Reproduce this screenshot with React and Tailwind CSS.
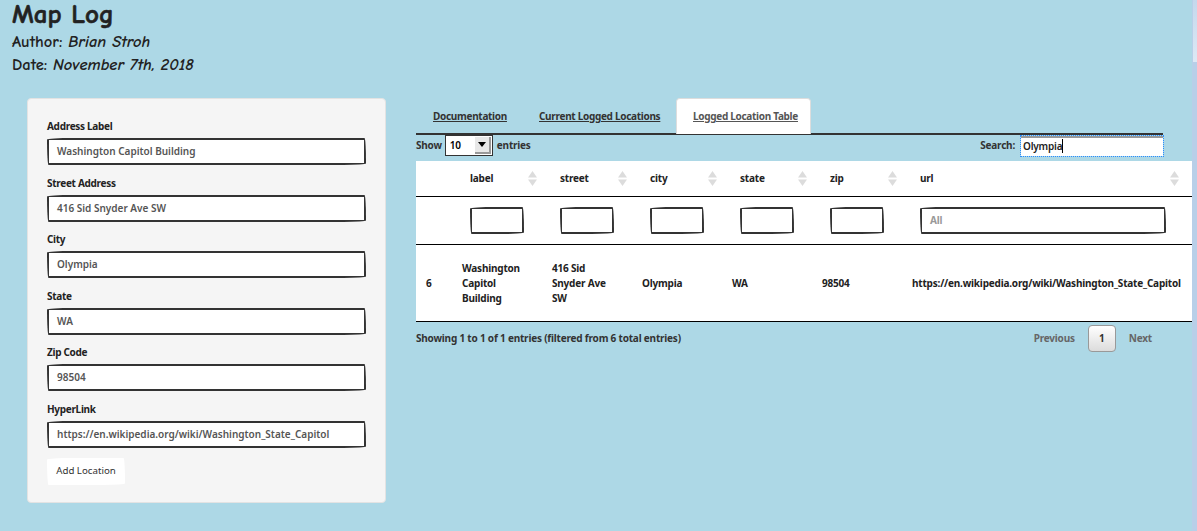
const sketch = "rounded-[255px_15px_225px_15px/15px_225px_15px_255px]";

const fields = [
  ["Address Label", "Washington Capitol Building"],
  ["Street Address", "416 Sid Snyder Ave SW"],
  ["City", "Olympia"],
  ["State", "WA"],
  ["Zip Code", "98504"],
  ["HyperLink", "https://en.wikipedia.org/wiki/Washington_State_Capitol"],
];

const columns = ["label", "street", "city", "state", "zip", "url"];

function SortArrows() {
  return (
    <svg width="9" height="15" viewBox="0 0 9 15" className="shrink-0">
      <path d="M4.5 0 L9 6.5 L0 6.5 Z" fill="#dcdcdc" />
      <path d="M0 8.5 L9 8.5 L4.5 15 Z" fill="#dcdcdc" />
    </svg>
  );
}

function Field({ label, value }) {
  return (
    <div className="mb-[10.5px]">
      <label className="block h-[14px] mb-[5px] text-[10px] tracking-[-0.3px] leading-[14px] font-bold text-[#222]">{label}</label>
      <div className={`h-[27px] w-[319px] px-[8px] border-2 border-[#333] bg-white text-[10px] leading-[23px] font-semibold text-[#555] whitespace-nowrap ${sketch}`}>
        {value}
      </div>
    </div>
  );
}

export default function App() {
  return (
    <div className="flex min-h-[531px] bg-[#add8e6] font-['Noto_Sans',sans-serif] text-[#333] overflow-hidden">
      <div className="flex-1 min-w-0">
        <div className="pl-3 h-[98px] font-['Comic_Neue','Comic_Sans_MS',cursive] text-[#222]">
          <h1 className="h-[30px] text-[27px] leading-[30px] font-bold [-webkit-text-stroke:0.6px_#222]">Map Log</h1>
          <p className="text-[16.5px] leading-[23px] font-semibold">Author: <em>Brian Stroh</em></p>
          <p className="text-[16.5px] leading-[23px] font-semibold">Date: <em>November 7th, 2018</em></p>
        </div>

        <div className="flex items-start">
          <div className="ml-[27px] w-[359px] h-[405px] px-[19px] pt-[20px] bg-[#f5f5f5] border border-[#e3e3e3] rounded">
            {fields.map(([label, value]) => (
              <Field key={label} label={label} value={value} />
            ))}
            <button className={`block h-[27px] w-[78px] bg-white text-[9.7px] text-[#333] ${sketch}`}>
              Add Location
            </button>
          </div>

          <div className="ml-[30px] w-[776px] shrink-0 text-[10px] tracking-[-0.2px] font-bold">
            <div className="flex w-[747px] h-[37px] border-b-2 border-[#333] tracking-[-0.3px]">
              <a className="w-[106px] pl-[17px] pt-[11px] text-[#333] underline">Documentation</a>
              <a className="w-[154px] pl-[17px] pt-[11px] text-[#333] underline">Current Logged Locations</a>
              <a className="w-[135px] h-[36px] pl-4 pt-[10px] bg-white rounded-t border border-b-0 border-[#ddd] text-[#555] underline">
                Logged Location Table
              </a>
            </div>

            <div className="flex items-start h-[26px] w-[747px]">
              <span className="mt-[3px]">Show</span>
              <div className="flex items-center justify-between ml-[3px] mr-[4px] w-[48px] h-[21px] pl-[4px] pr-[1px] bg-white border border-[#333] font-semibold text-black">
                <span>10</span>
                <span className="flex items-center justify-center w-[16px] h-[17px] bg-[#e8e8e8] border-r-2 border-b-2 border-[#999]">
                  <svg width="8" height="5" viewBox="0 0 8 5"><path d="M0 0 L8 0 L4 5 Z" fill="#000" /></svg>
                </span>
              </div>
              <span className="mt-[3px]">entries</span>
              <span className="ml-auto mr-[6px] mt-[3px]">Search:</span>
              <div className="mt-[1px] w-[142px] h-[20px] pl-[2px] bg-white border-t-2 border-t-[#999] outline-1 outline-dotted outline-[#2a8cff] text-[#222] font-semibold leading-[17px]">
                <span className="border-r border-black">Olympia</span>
              </div>
            </div>

            <div className="bg-white text-[#222]">
              <div className="flex items-center h-[36px] pl-[54px] border-b border-black">
                {columns.map((name) => (
                  <div
                    key={name}
                    className={name === "url" ? "flex items-center justify-between flex-1 pr-[13px]" : "flex items-center justify-between w-[90px] shrink-0 pr-[23px]"}
                  >
                    <span>{name}</span>
                    <SortArrows />
                  </div>
                ))}
              </div>
              <div className="flex items-center h-[48px] pl-[54px] border-b border-black">
                {columns.map((name) => (
                  <div key={name} className={name === "url" ? "flex-1 pr-[26px]" : "w-[90px] shrink-0"}>
                    <div className={`${name === "url" ? "w-full pl-2" : "w-[54px]"} h-[27px] border-2 border-[#333] text-[10px] leading-[23px] text-[#999] ${sketch}`}>
                      {name === "url" ? "All" : ""}
                    </div>
                  </div>
                ))}
              </div>
              <div className="flex items-center h-[77px] border-b border-black">
                <div className="w-[46px] shrink-0 pl-[10px]">6</div>
                <div className="w-[90px] shrink-0 leading-[15px]">Washington<br />Capitol<br />Building</div>
                <div className="w-[90px] shrink-0 leading-[15px]">416 Sid<br />Snyder Ave<br />SW</div>
                <div className="w-[90px] shrink-0">Olympia</div>
                <div className="w-[90px] shrink-0">WA</div>
                <div className="w-[90px] shrink-0">98504</div>
                <div className="whitespace-nowrap">https://en.wikipedia.org/wiki/Washington_State_Capitol</div>
              </div>
            </div>

            <div className="flex items-start mt-[3px]">
              <span className="mt-[6px] text-[#333]">Showing 1 to 1 of 1 entries (filtered from 6 total entries)</span>
              <div className="flex items-center ml-auto mr-[40px] text-[#666]">
                <span>Previous</span>
                <span className="flex items-center justify-center mx-[13px] w-[28px] h-[27px] rounded-sm border border-[#999] bg-gradient-to-b from-white to-[#dcdcdc] text-[#333]">1</span>
                <span>Next</span>
              </div>
            </div>
          </div>
        </div>
      </div>
      <div className="w-[5px] shrink-0 pl-[1px] bg-[#b8cfe8]">
        <div className="h-[62px] bg-gradient-to-b from-[#c4d8ec] to-[#dde9f5]" />
      </div>
    </div>
  );
}
